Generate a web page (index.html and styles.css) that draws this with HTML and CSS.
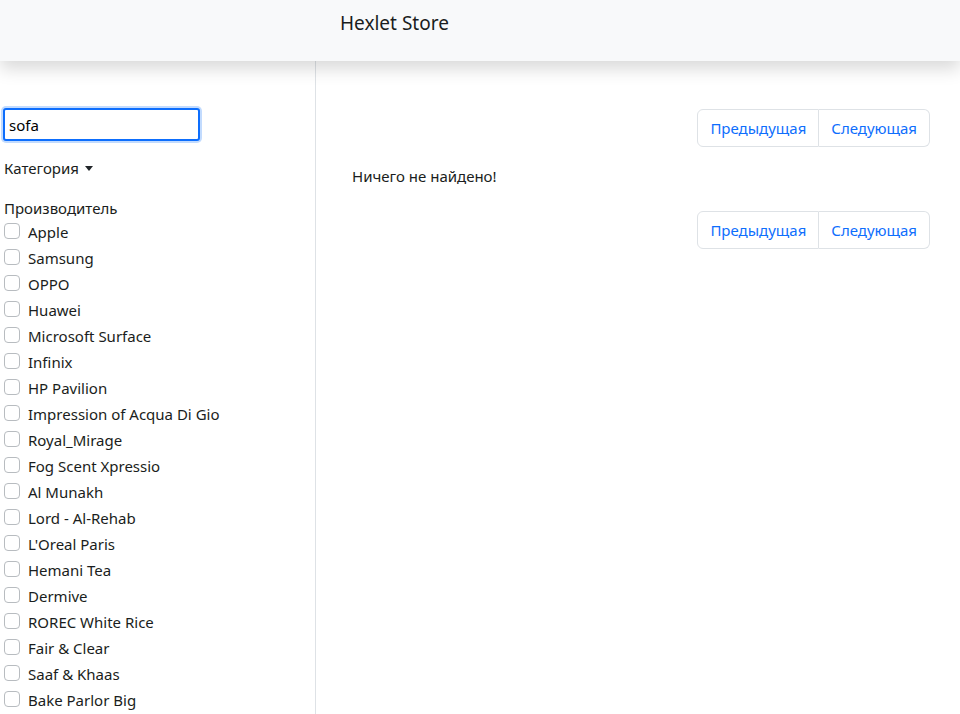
FILE: index.html
```html
<!DOCTYPE html>
<html lang="ru">
<head>
<meta charset="utf-8">
<title>Hexlet Store</title>
<link rel="stylesheet" href="styles.css">
</head>
<body>
<header class="navbar">
  <div class="brand">Hexlet Store</div>
</header>
<div class="layout">
  <aside class="sidebar">
    <input class="search" type="text" value="sofa">
    <div class="dropdown">Категория <span class="caret"></span></div>
    <div class="group-title">Производитель</div>
    <ul class="brands">
      <li><span class="check"></span>Apple</li>
      <li><span class="check"></span>Samsung</li>
      <li><span class="check"></span>OPPO</li>
      <li><span class="check"></span>Huawei</li>
      <li><span class="check"></span>Microsoft Surface</li>
      <li><span class="check"></span>Infinix</li>
      <li><span class="check"></span>HP Pavilion</li>
      <li><span class="check"></span>Impression of Acqua Di Gio</li>
      <li><span class="check"></span>Royal_Mirage</li>
      <li><span class="check"></span>Fog Scent Xpressio</li>
      <li><span class="check"></span>Al Munakh</li>
      <li><span class="check"></span>Lord - Al-Rehab</li>
      <li><span class="check"></span>L'Oreal Paris</li>
      <li><span class="check"></span>Hemani Tea</li>
      <li><span class="check"></span>Dermive</li>
      <li><span class="check"></span>ROREC White Rice</li>
      <li><span class="check"></span>Fair &amp; Clear</li>
      <li><span class="check"></span>Saaf &amp; Khaas</li>
      <li><span class="check"></span>Bake Parlor Big</li>
    </ul>
  </aside>
  <main class="content">
    <nav class="pager">
      <a class="page-btn first">Предыдущая</a><a class="page-btn last">Следующая</a>
    </nav>
    <p class="empty">Ничего не найдено!</p>
    <nav class="pager">
      <a class="page-btn first">Предыдущая</a><a class="page-btn last">Следующая</a>
    </nav>
  </main>
</div>
</body>
</html>
```
FILE: styles.css
```css
* { box-sizing: border-box; }
html, body { margin: 0; padding: 0; height: 100%; overflow: hidden; }
body {
  font-family: "Noto Sans", "Open Sans", sans-serif;
  font-size: 15px;
  color: #1a1d20;
  background: #fff;
}
.navbar {
  position: relative;
  z-index: 2;
  height: 61px;
  background: #f8f9fa;
  box-shadow: 0 8px 16px rgba(0,0,0,0.15);
  display: flex;
  align-items: center;
  padding-left: 340px;
}
.brand { font-size: 19px; line-height: 1; margin-top: -14px; }
.layout { display: flex; height: calc(100% - 61px); }
.sidebar {
  width: 316px;
  border-right: 1px solid #dee2e6;
  padding: 47px 0 0 3px;
  flex-shrink: 0;
}
.search {
  display: block;
  width: 197px;
  height: 33px;
  border: 2px solid #0d6efd;
  border-radius: 3px;
  box-shadow: 0 0 0 2px rgba(13,110,253,0.25);
  font: inherit;
  font-size: 15px;
  padding: 0 4px;
  color: #000;
  outline: none;
}
.dropdown { margin: 16px 0 0 1px; line-height: 22px; }
.caret {
  display: inline-block;
  width: 0; height: 0;
  border-left: 4px solid transparent;
  border-right: 4px solid transparent;
  border-top: 5px solid #212529;
  vertical-align: 3px;
  margin-left: 2px;
}
.group-title { margin: 18px 0 0 1px; line-height: 22px; }
.brands { list-style: none; margin: 0; padding: 0 0 0 1px; }
.brands li { height: 26px; display: flex; align-items: center; }
.check {
  width: 16px; height: 16px;
  border: 1px solid #b8bcc0;
  border-radius: 4px;
  margin-right: 8px;
  margin-top: -3px;
  flex-shrink: 0;
}
.content { flex: 1; padding: 48px 30px 0 36px; }
.pager { display: flex; justify-content: flex-end; }
.page-btn {
  display: block;
  height: 38px;
  line-height: 36px;
  padding: 0 12px;
  color: #0d6efd;
  border: 1px solid #dee2e6;
  font-size: 15px;
}
.page-btn.first { border-radius: 6px 0 0 6px; }
.page-btn.last { border-left: none; border-radius: 0 6px 6px 0; }
.empty { margin: 18px 0 24px 0; line-height: 22px; }
```
